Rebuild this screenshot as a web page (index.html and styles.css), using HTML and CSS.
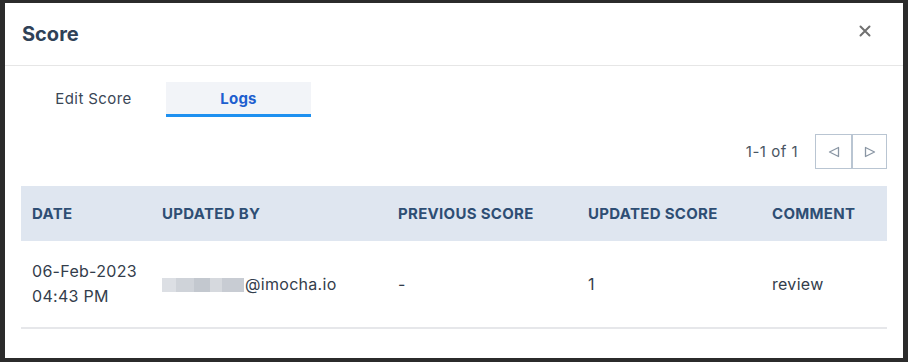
FILE: index.html
```html
<!DOCTYPE html>
<html>
<head>
<meta charset="utf-8">
<link rel="stylesheet" href="styles.css">
</head>
<body>
<div class="modal">
  <div class="modal-header">
    <h2 class="title">Score</h2>
    <span class="close"><svg width="12" height="12" viewBox="0 0 12 12"><path d="M1.5 1.5 L10.5 10.5 M10.5 1.5 L1.5 10.5" stroke="#707070" stroke-width="2" stroke-linecap="round"/></svg></span>
  </div>
  <div class="modal-body">
    <div class="tabs">
      <div class="tab">Edit Score</div>
      <div class="tab active">Logs</div>
    </div>
    <div class="pager">
      <span class="pager-text">1-1 of 1</span>
      <div class="pager-btns">
        <button class="pbtn"><svg width="12" height="12" viewBox="0 0 12 12"><path d="M10.5 1.5 L1.5 6 L10.5 10.5 Z" fill="none" stroke="#8a96a4" stroke-width="1.3" stroke-linejoin="round"/></svg></button>
        <button class="pbtn"><svg width="12" height="12" viewBox="0 0 12 12"><path d="M1.5 1.5 L10.5 6 L1.5 10.5 Z" fill="none" stroke="#8a96a4" stroke-width="1.3" stroke-linejoin="round"/></svg></button>
      </div>
    </div>
    <table class="logs">
      <thead>
        <tr>
          <th class="c1">DATE</th>
          <th class="c2">UPDATED BY</th>
          <th class="c3">PREVIOUS SCORE</th>
          <th class="c4">UPDATED SCORE</th>
          <th class="c5">COMMENT</th>
        </tr>
      </thead>
      <tbody>
        <tr>
          <td>06-Feb-2023<br>04:43 PM</td>
          <td><span class="blur"><i class="b1"></i><i class="b2"></i><i class="b3"></i><i class="b4"></i><i class="b5"></i></span>@imocha.io</td>
          <td>-</td>
          <td>1</td>
          <td>review</td>
        </tr>
      </tbody>
    </table>
  </div>
</div>
</body>
</html>
```

FILE: styles.css
```css
* { box-sizing: border-box; }
html, body { margin: 0; }
body {
  width: 908px;
  height: 362px;
  background: #2b2b2b;
  padding: 3px 5px 4px 5px;
  font-family: "Inter", "DejaVu Sans", sans-serif;
}
.modal {
  background: #fff;
  height: 355px;
  width: 898px;
}
.modal-header {
  height: 63px;
  border-bottom: 1px solid #e6e6e6;
  display: flex;
  align-items: center;
  justify-content: space-between;
  padding: 0 32px 0 17px;
}
.title {
  margin: 0;
  font-size: 20px;
  font-weight: 700;
  color: #2f4157;
}
.close {
  display: flex;
  margin-top: -6px;
}
.modal-body {
  padding: 16px 16px 0 16px;
}
.tabs {
  display: flex;
}
.tab {
  width: 145px;
  height: 35px;
  display: flex;
  align-items: center;
  justify-content: center;
  font-size: 15px;
  letter-spacing: 0.4px;
  color: #3a4656;
  border-bottom: 3px solid transparent;
  padding-top: 1px;
}
.tab.active {
  background: #f2f4f8;
  color: #1d5fcf;
  font-weight: 700;
  letter-spacing: 0.2px;
  border-bottom-color: #1e90f0;
}
.pager {
  display: flex;
  justify-content: flex-end;
  align-items: center;
  gap: 17px;
  margin-top: 17px;
}
.pager-text {
  font-size: 15px;
  letter-spacing: 0.5px;
  color: #4a5563;
}
.pager-btns {
  display: flex;
  border: 1px solid #b9c5d2;
}
.pbtn {
  width: 35px;
  height: 33px;
  background: #fff;
  border: none;
  padding: 0;
  display: flex;
  align-items: center;
  justify-content: center;
}
.pbtn + .pbtn { border-left: 2px solid #b9c5d2; }
.logs {
  margin-top: 17px;
  width: 100%;
  border-collapse: collapse;
}
.logs th {
  background: #dfe6f0;
  height: 55px;
  text-align: left;
  font-size: 15px;
  letter-spacing: 0.3px;
  font-weight: 700;
  color: #2e4e74;
  padding: 0 0 0 11px;
}
.logs td {
  height: 87px;
  font-size: 16px;
  letter-spacing: 0.3px;
  color: #333d4b;
  line-height: 25px;
  padding: 0 0 0 11px;
  border-bottom: 2px solid #e6e7ea;
  vertical-align: middle;
}
.c1 { width: 130px; }
.c2 { width: 236px; }
.c3 { width: 190px; }
.c4 { width: 184px; }
.blur {
  display: inline-flex;
  vertical-align: middle;
  height: 14px;
  margin-right: 1px;
}
.blur i { display: block; height: 14px; }
.b1 { width: 14px; background: #dcdfe4; }
.b2 { width: 18px; background: #cfd3d9; }
.b3 { width: 16px; background: #c3c8cf; }
.b4 { width: 12px; background: #d6d9de; }
.b5 { width: 22px; background: #c8ccd3; }
```
